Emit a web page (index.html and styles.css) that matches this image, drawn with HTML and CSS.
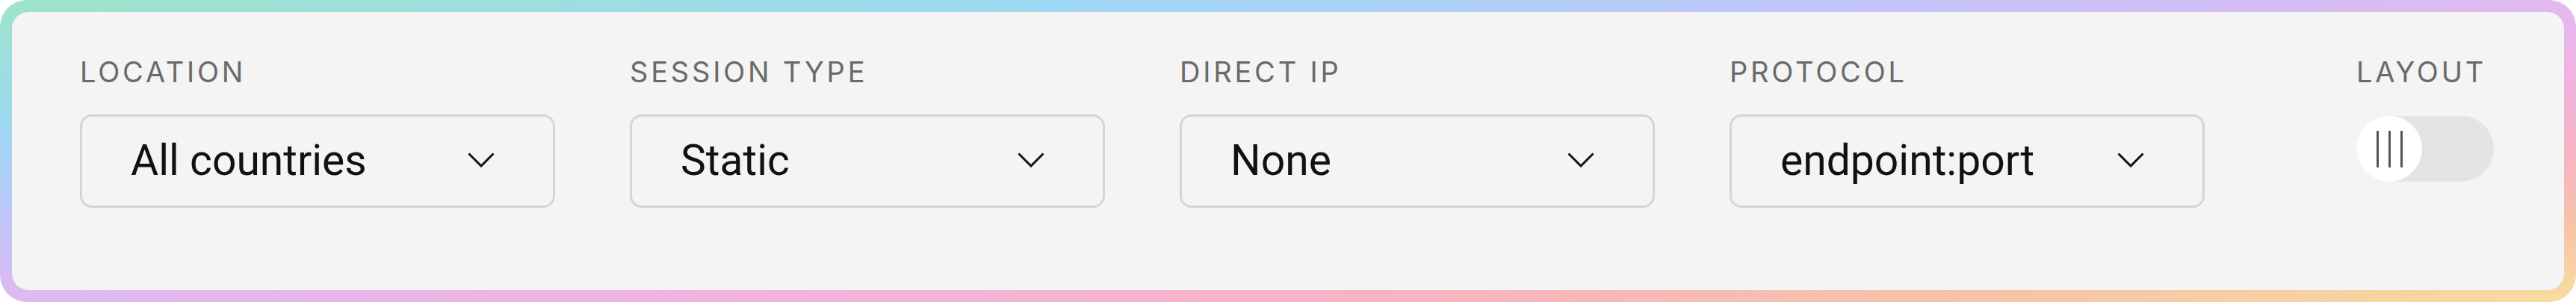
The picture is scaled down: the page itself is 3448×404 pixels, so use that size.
FILE: index.html
```html
<!DOCTYPE html>
<html lang="en">
<head>
  <meta charset="UTF-8">
  <meta name="viewport" content="width=device-width, initial-scale=1.0">
  <title>Proxy Filters</title>
  <link rel="stylesheet" href="styles.css">
</head>
<body>
  <div class="frame">
    <div class="panel">
      <div class="field">
        <label class="label">Location</label>
        <div class="select">
          <span>All countries</span>
          <svg class="chevron" viewBox="0 0 36 20"><polyline points="1.5,1.5 18,18 34.5,1.5"/></svg>
        </div>
      </div>

      <div class="field">
        <label class="label">Session type</label>
        <div class="select">
          <span>Static</span>
          <svg class="chevron" viewBox="0 0 36 20"><polyline points="1.5,1.5 18,18 34.5,1.5"/></svg>
        </div>
      </div>

      <div class="field">
        <label class="label">Direct IP</label>
        <div class="select">
          <span>None</span>
          <svg class="chevron" viewBox="0 0 36 20"><polyline points="1.5,1.5 18,18 34.5,1.5"/></svg>
        </div>
      </div>

      <div class="field">
        <label class="label">Protocol</label>
        <div class="select">
          <span>endpoint:port</span>
          <svg class="chevron" viewBox="0 0 36 20"><polyline points="1.5,1.5 18,18 34.5,1.5"/></svg>
        </div>
      </div>

      <div class="field layout-field">
        <label class="label">Layout</label>
        <div class="toggle">
          <div class="knob">
            <span></span><span></span><span></span>
          </div>
        </div>
      </div>
    </div>
  </div>
</body>
</html>
```

FILE: styles.css
```css
* {
  margin: 0;
  padding: 0;
  box-sizing: border-box;
}
body {
  width: 3448px;
  height: 404px;
  font-family: 'Inter', sans-serif;
  background: #ffffff;
}
.frame {
  height: 404px;
  padding: 16px;
  border-radius: 36px;
  background: linear-gradient(to bottom right,
    #9fe4c8 0%,
    #9dd9f1 20%,
    #abd1f8 28%,
    #c4c2f8 38%,
    #dfbaf0 50%,
    #f1b3e1 62%,
    #f5b4c6 75%,
    #f7c2a8 87%,
    #f7dea0 100%);
}
.panel {
  height: 100%;
  background-color: #f4f4f4;
  border-radius: 22px;
  display: flex;
  gap: 100px;
  padding: 57px 94px 0 91px;
}
.field {
  display: flex;
  flex-direction: column;
  width: 636px;
}
.label {
  font-family: 'Inter', sans-serif;
  font-size: 38px;
  line-height: 46px;
  letter-spacing: 0.1em;
  text-transform: uppercase;
  color: #6a6a6a;
}
.select {
  margin-top: 34px;
  height: 125px;
  border: 3px solid #d5d5d5;
  border-radius: 16px;
  display: flex;
  align-items: center;
  justify-content: space-between;
  padding: 0 78px 3px 65px;
  font-family: 'Roboto', sans-serif;
  font-size: 57px;
  color: #111111;
}
.chevron {
  width: 36px;
  height: 20px;
  fill: none;
  stroke: #111111;
  stroke-width: 3;
}
.layout-field {
  width: 184px;
  margin-left: auto;
}
.toggle {
  margin-top: 36px;
  width: 184px;
  height: 88px;
  border-radius: 44px;
  background-color: #e4e4e4;
  display: flex;
}
.knob {
  width: 88px;
  height: 88px;
  border-radius: 50%;
  background-color: #ffffff;
  display: flex;
  justify-content: center;
  align-items: center;
  gap: 13px;
}
.knob span {
  width: 3px;
  height: 49px;
  background-color: #555555;
}
```
